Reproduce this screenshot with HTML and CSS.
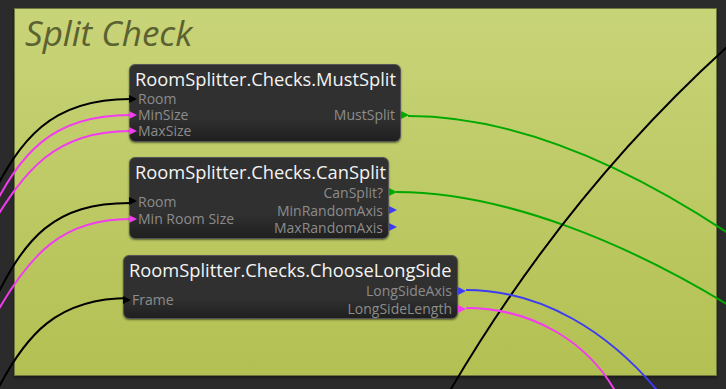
FILE: index.html
```html
<!DOCTYPE html>
<html lang="en">
<head>
    <meta charset="UTF-8">
    <title>Split Check</title>
    <link rel="stylesheet" href="styles.css">
</head>
<body>

    <div class="canvas">
        <!-- Groupe -->
        <div class="group">
            <span class="group-title">Split Check</span>
        </div>

        <!-- Fils -->
        <svg class="wires" width="726" height="389" viewBox="0 0 726 389">
            <path class="w-black" d="M -10 200 C 20 140, 50 99, 130 99"/>
            <path class="w-pink" d="M -10 214 C 20 155, 50 115, 130 115"/>
            <path class="w-pink" d="M -10 228 C 25 170, 55 131, 130 131"/>
            <path class="w-black" d="M -10 310 C 25 235, 55 203, 130 203"/>
            <path class="w-pink" d="M -10 325 C 30 250, 65 219, 130 219"/>
            <path class="w-black" d="M -10 405 C 25 330, 60 298, 130 298"/>

            <path class="w-green" d="M 408 116 C 520 116, 640 170, 760 255"/>
            <path class="w-green" d="M 396 192 C 500 192, 630 240, 760 325"/>
            <path class="w-black" d="M 440 408 Q 570 180 760 18"/>
            <path class="w-blue" d="M 466 290 C 540 290, 610 330, 665 400"/>
            <path class="w-pink" d="M 466 308 C 530 308, 590 340, 620 400"/>
        </svg>

        <!-- Noeuds -->
        <div class="node n1">
            <div class="node-title">RoomSplitter.Checks.MustSplit</div>
            <div class="node-body">
                <div class="ports in">
                    <div class="port black">Room</div>
                    <div class="port pink">MinSize</div>
                    <div class="port pink">MaxSize</div>
                </div>
                <div class="ports out">
                    <div class="port green">MustSplit</div>
                </div>
            </div>
        </div>

        <div class="node n2">
            <div class="node-title">RoomSplitter.Checks.CanSplit</div>
            <div class="node-body">
                <div class="ports in">
                    <div class="port black">Room</div>
                    <div class="port pink">Min Room Size</div>
                </div>
                <div class="ports out">
                    <div class="port green">CanSplit?</div>
                    <div class="port blue">MinRandomAxis</div>
                    <div class="port blue">MaxRandomAxis</div>
                </div>
            </div>
        </div>

        <div class="node n3">
            <div class="node-title">RoomSplitter.Checks.ChooseLongSide</div>
            <div class="node-body">
                <div class="ports in">
                    <div class="port black">Frame</div>
                </div>
                <div class="ports out">
                    <div class="port blue">LongSideAxis</div>
                    <div class="port pink">LongSideLength</div>
                </div>
            </div>
        </div>
    </div>

</body>
</html>
```

FILE: styles.css
```css
/* Style général */
body {
    margin: 0;
    padding: 0;
    background-color: #2b2b2b;
    font-family: "Open Sans", "Noto Sans", sans-serif;
    overflow: hidden;
}

.canvas {
    position: relative;
    width: 726px;
    height: 389px;
    box-sizing: border-box;
    padding: 8px 9px 13px 14px;
}

/* Groupe vert */
.group {
    height: 100%;
    box-sizing: border-box;
    border: 1px solid #6e763f;
    background: linear-gradient(to bottom, #c8d478, #b3c052);
    box-shadow: 0 2px 3px rgba(0, 0, 0, 0.4);
    padding: 5px 0 0 10px;
}

.group-title {
    font-style: italic;
    font-size: 35px;
    line-height: 38px;
    color: #5b6130;
}

/* Fils */
.wires {
    position: absolute;
    left: 0;
    top: 0;
}

.wires path {
    fill: none;
    stroke-width: 2;
}

.w-black { stroke: #000; }
.w-pink { stroke: #f23cf0; }
.w-green { stroke: #00a800; }
.w-blue { stroke: #3c3cf4; }

/* Noeuds */
.node {
    position: absolute;
    box-sizing: border-box;
    border: 1px solid #555;
    border-radius: 6px;
    background: linear-gradient(to bottom, #303030 70%, #1f1f1f);
    box-shadow: 0 1px 2px rgba(0, 0, 0, 0.5);
    display: flex;
    flex-direction: column;
}

.n1 { left: 129px; top: 64px; width: 272px; height: 78px; }
.n2 { left: 129px; top: 157px; width: 260px; height: 82px; }
.n3 { left: 123px; top: 255px; width: 335px; height: 64px; }

.node-title {
    color: #f4f4f4;
    font-size: 18.3px;
    line-height: 24px;
    padding: 2px 4px 0 5px;
    white-space: nowrap;
}

.node-body {
    flex: 1;
    display: flex;
    justify-content: space-between;
    padding-bottom: 3px;
}

.n1 .node-body { padding-bottom: 2px; }

.ports {
    display: flex;
    flex-direction: column;
    justify-content: center;
}

.n1 .port { line-height: 16px; }
.n2 .port { line-height: 17.5px; }
.n3 .port { line-height: 18px; }

.port {
    position: relative;
    color: #8c8c8c;
    font-size: 14px;
    white-space: nowrap;
}

.in .port { padding-left: 8px; }
.out .port { padding-right: 5px; text-align: right; }

.port::before {
    content: "";
    position: absolute;
    top: 50%;
    margin-top: -4.5px;
    border-top: 4.5px solid transparent;
    border-bottom: 4.5px solid transparent;
    border-left: 8px solid var(--c);
}

.in .port::before { left: -1px; }
.out .port::before { right: -9px; }

.black { --c: #000; }
.pink { --c: #f23cf0; }
.green { --c: #00a800; }
.blue { --c: #3c3cf4; }
```
